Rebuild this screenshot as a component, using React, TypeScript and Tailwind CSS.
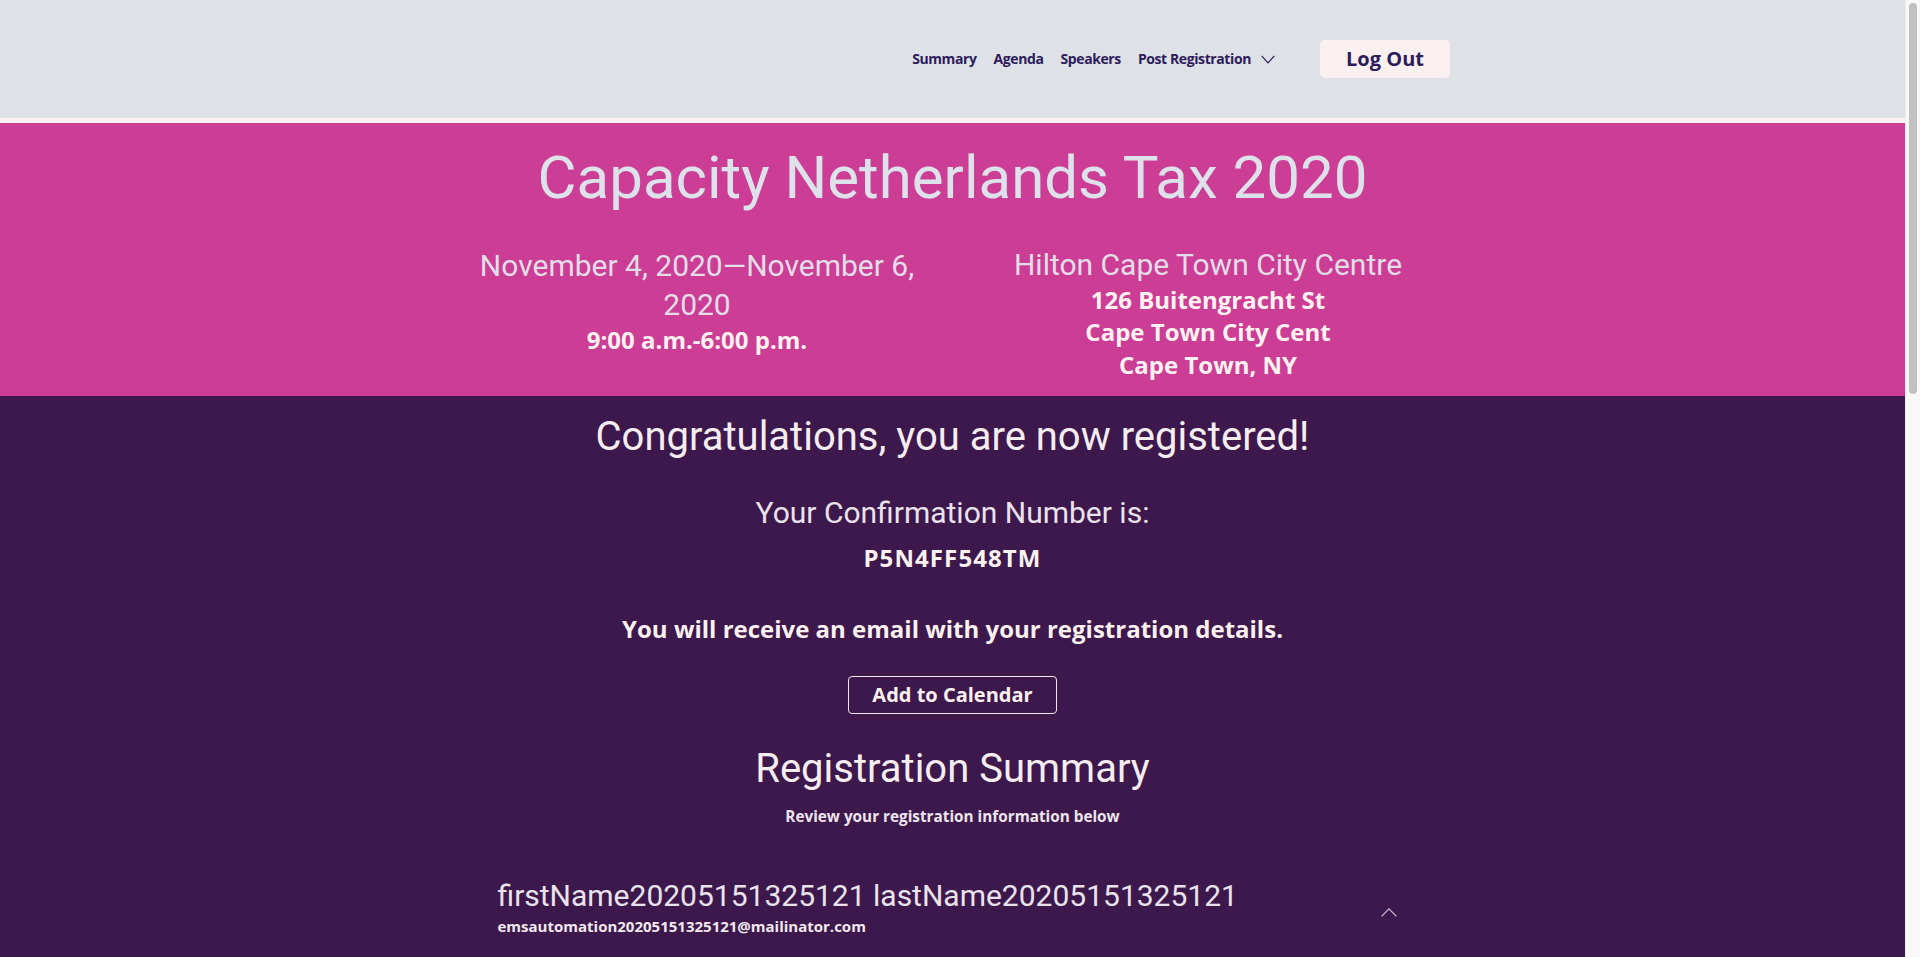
export default function App() {
  return (
    <div className="flex h-screen overflow-hidden bg-[#3c184c]">
      <div className="min-w-0 flex-1 overflow-hidden">
        <header className="h-[118px] bg-[#dee1e6]">
          <div className="mx-auto flex h-full w-[1140px] items-center justify-end px-[15px]">
            <nav className="flex items-center gap-[17px] font-['Open_Sans',sans-serif] text-[14px] font-bold leading-[20px] tracking-[-0.4px] text-[#2d1c5c]">
              <a className="cursor-pointer">Summary</a>
              <a className="cursor-pointer">Agenda</a>
              <a className="cursor-pointer">Speakers</a>
              <a className="flex cursor-pointer items-center gap-[10px]">
                <span>Post Registration</span>
                <svg width="14" height="9" viewBox="0 0 14 9" fill="none" className="mt-[1px]">
                  <path d="M0.6 0.8 L7 7.8 L13.4 0.8" stroke="#2d1c5c" strokeWidth="1.2" />
                </svg>
              </a>
            </nav>
            <button className="ml-[45px] mr-[57.5px] h-[38px] w-[130px] rounded-[5px] bg-[#faf0ef] font-['Open_Sans',sans-serif] text-[20px] font-bold leading-[38px] text-[#2d1c5c]">
              Log Out
            </button>
          </div>
        </header>
        <div className="h-[5px] bg-[#f9f0ef]" />
        <section className="bg-[#cc3d96] pb-[15px] pt-[19px]">
          <h1 className="text-center font-['Roboto',sans-serif] text-[60px] font-normal leading-[72px] text-[#dde2ea]">
            Capacity Netherlands Tax 2020
          </h1>
          <div className="mx-auto mt-[32px] grid w-[1022px] grid-cols-2">
            <div className="px-[15px] text-center">
              <p className="font-['Roboto',sans-serif] text-[30px] font-normal leading-[39px] text-[#e3dde7]">
                November 4, 2020—November 6, 2020
              </p>
              <p className="font-['Open_Sans',sans-serif] text-[24px] font-bold leading-[32px] text-[#fdf2f0]">
                9:00 a.m.-6:00 p.m.
              </p>
            </div>
            <div className="px-[15px] text-center">
              <p className="font-['Roboto',sans-serif] text-[30px] font-normal leading-[37.5px] text-[#e3dde7]">
                Hilton Cape Town City Centre
              </p>
              <div className="font-['Open_Sans',sans-serif] text-[24px] font-bold leading-[32.5px] text-[#fdf2f0]">
                <p>126 Buitengracht St</p>
                <p>Cape Town City Cent</p>
                <p>Cape Town, NY</p>
              </div>
            </div>
          </div>
        </section>
        <main className="h-[1946px] bg-[#3c184c] pt-[17px] text-center">
          <h2 className="font-['Roboto',sans-serif] text-[40px] font-normal leading-[48px] text-[#f6edf0]">
            Congratulations, you are now registered!
          </h2>
          <p className="mt-[34px] font-['Roboto',sans-serif] text-[30px] font-normal leading-[36px] text-[#ebe3ec]">
            Your Confirmation Number is:
          </p>
          <p className="mt-[11px] font-['Open_Sans',sans-serif] text-[24px] font-bold leading-[32px] tracking-[1.1px] text-[#fdf2f0]">
            P5N4FF548TM
          </p>
          <p className="mt-[39px] font-['Open_Sans',sans-serif] text-[24px] font-bold leading-[32px] text-[#fdf2f0]">
            You will receive an email with your registration details.
          </p>
          <div className="mt-[31px] flex justify-center">
            <button className="h-[38px] w-[209px] rounded-[4px] border border-[#f3e6ee] font-['Open_Sans',sans-serif] text-[20px] font-bold leading-[36px] text-[#fdf2f0]">
              Add to Calendar
            </button>
          </div>
          <h2 className="mt-[31px] font-['Roboto',sans-serif] text-[40px] font-normal leading-[48px] text-[#f6edf0]">
            Registration Summary
          </h2>
          <p className="mt-[12px] font-['Open_Sans',sans-serif] text-[15.3px] font-bold leading-[22px] text-[#efe5ec]">
            Review your registration information below
          </p>
          <div className="mx-auto mt-[49px] w-[940px] px-[15px] text-left">
            <div className="flex items-start justify-between">
              <div>
                <p className="font-['Roboto',sans-serif] text-[30px] font-normal leading-[39px] text-[#ebe3ec]">
                  firstName20205151325121 lastName20205151325121
                </p>
                <p className="font-['Open_Sans',sans-serif] text-[15px] font-bold leading-[22px] text-[#f3e9ee]">
                  emsautomation20205151325121@mailinator.com
                </p>
              </div>
              <svg width="16" height="9" viewBox="0 0 16 9" fill="none" className="mr-[11px] mt-[32px]">
                <path d="M0.6 8.4 L8 0.8 L15.4 8.4" stroke="#cbc1d2" strokeWidth="1.2" />
              </svg>
            </div>
          </div>
        </main>
      </div>
      <div className="flex w-[15px] shrink-0 justify-center border-l border-[#ececec] bg-[#f8f8f8]">
        <div className="mt-[3px] h-[391px] w-[8px] rounded-full bg-[#c1c1c1]" />
      </div>
    </div>
  );
}
